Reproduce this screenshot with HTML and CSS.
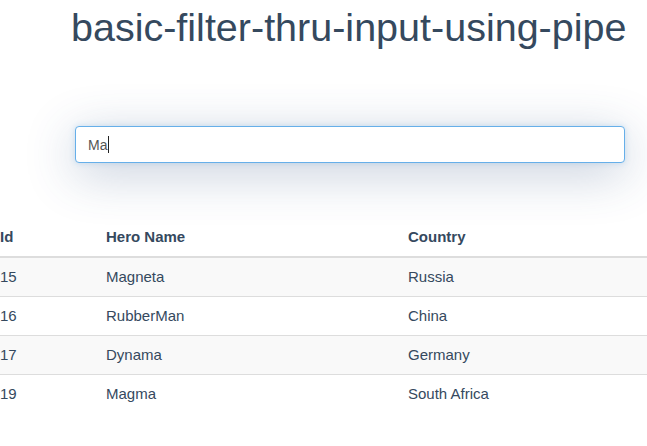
FILE: index.html
```html
<!DOCTYPE html>
<html lang="en">
<head>
<meta charset="utf-8">
<title>basic-filter-thru-input-using-pipe</title>
<link rel="stylesheet" href="styles.css">
</head>
<body>
<div class="app">
  <h1 class="title">basic-filter-thru-input-using-pipe</h1>
  <div class="search-wrap">
    <div class="search" role="textbox" aria-label="Filter heroes"><span class="search-value">Ma</span><span class="caret"></span></div>
  </div>
  <table class="heroes">
    <thead>
      <tr><th class="c-id">Id</th><th class="c-name">Hero Name</th><th class="c-country">Country</th></tr>
    </thead>
    <tbody>
      <tr><td class="c-id">15</td><td class="c-name">Magneta</td><td class="c-country">Russia</td></tr>
      <tr><td class="c-id">16</td><td class="c-name">RubberMan</td><td class="c-country">China</td></tr>
      <tr><td class="c-id">17</td><td class="c-name">Dynama</td><td class="c-country">Germany</td></tr>
      <tr><td class="c-id">19</td><td class="c-name">Magma</td><td class="c-country">South Africa</td></tr>
    </tbody>
  </table>
</div>
</body>
</html>
```
FILE: styles.css
```css
html, body {
  margin: 0;
  padding: 0;
  background: #ffffff;
}
body {
  font-family: "Liberation Sans", Arial, sans-serif;
  color: #2c3e50;
  overflow: hidden;
}
.app {
  display: flex;
  flex-direction: column;
}
.title {
  margin: 3px 0 0 71px;
  font-size: 39.5px;
  line-height: 48px;
  font-weight: normal;
  color: #35495e;
}
.search-wrap {
  padding: 75px 22px 0 75px;
}
.search {
  box-sizing: border-box;
  height: 37px;
  width: 550px;
  border: 1px solid #66afe9;
  border-radius: 4px;
  padding: 0 12px;
  display: flex;
  align-items: center;
  font-size: 14px;
  color: #555555;
  background: #fff;
  box-shadow: 0 10px 50px rgba(50, 80, 130, 0.3), 0 0 6px rgba(102, 175, 233, 0.3);
}
.caret {
  display: inline-block;
  width: 1px;
  height: 17px;
  background: #222;
  margin-left: 1px;
}
.heroes {
  margin-top: 55px;
  width: 100%;
  border-collapse: collapse;
  font-size: 15px;
  line-height: 22px;
  color: #35495e;
}
.heroes th, .heroes td {
  padding: 8px;
  text-align: left;
}
.heroes th {
  font-weight: bold;
  border-bottom: 2px solid #dddddd;
}
.heroes td {
  border-bottom: 1px solid #dddddd;
}
.heroes tbody tr:nth-child(odd) {
  background: #f9f9f9;
}
.heroes tbody tr:last-child td {
  border-bottom: none;
}
.heroes .c-id {
  padding-left: 0;
  width: 90px;
}
.heroes .c-name {
  width: 286px;
}
```
